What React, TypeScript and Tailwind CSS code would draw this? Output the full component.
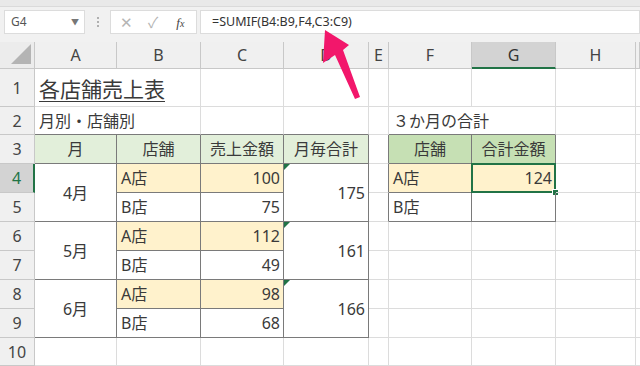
type Edge = 'l' | 'd';

interface Cell {
  t?: string;
  span?: 'r' | 'c';
  r?: Edge;
  b?: Edge;
  bg?: 'g' | 'G' | 'y';
  al?: 'l' | 'c' | 'r';
  tri?: boolean;
  sel?: boolean;
  title?: boolean;
}

const R = { l: 'border-r border-r-[#dcdcdc]', d: 'border-r border-r-[#7a7a7a]' };
const B = { l: 'border-b border-b-[#dcdcdc]', d: 'border-b border-b-[#7a7a7a]' };
const BG = { g: 'bg-[#e2efda]', G: 'bg-[#c6e0b4]', y: 'bg-[#fff2cc]' };
const AL = { l: 'justify-start pl-[4px]', c: 'justify-center', r: 'justify-end pr-[3px]' };

const L: Cell = {};
const dk = (c: Cell = {}): Cell => ({ r: 'd', b: 'd', ...c });

// excel rows 1..10, columns A..I (spans skip covered cells)
const rows: Cell[][] = [
  [{ t: '各店舗売上表', span: 'c', title: true }, L, L, L, L, L, L, L],
  [{ t: '月別・店舗別', span: 'c', b: 'd' }, { b: 'd' }, { b: 'd' }, L, { t: '３か月の合計', span: 'c', b: 'd' }, L, L],
  [
    dk({ t: '月', bg: 'g', al: 'c' }),
    dk({ t: '店舗', bg: 'g', al: 'c' }),
    dk({ t: '売上金額', bg: 'g', al: 'c' }),
    dk({ t: '月毎合計', bg: 'g', al: 'c' }),
    { r: 'd' },
    dk({ t: '店舗', bg: 'G', al: 'c' }),
    dk({ t: '合計金額', bg: 'G', al: 'c' }),
    L,
    L,
  ],
  [
    dk({ t: '4月', span: 'r', al: 'c' }),
    dk({ t: 'A店', bg: 'y' }),
    dk({ t: '100', bg: 'y', al: 'r' }),
    dk({ t: '175', span: 'r', al: 'r', tri: true }),
    { r: 'd' },
    dk({ t: 'A店', bg: 'y' }),
    dk({ t: '124', bg: 'y', al: 'r', sel: true }),
    L,
    L,
  ],
  [dk({ t: 'B店' }), dk({ t: '75', al: 'r' }), { r: 'd' }, dk({ t: 'B店' }), dk(), L, L],
  [
    dk({ t: '5月', span: 'r', al: 'c' }),
    dk({ t: 'A店', bg: 'y' }),
    dk({ t: '112', bg: 'y', al: 'r' }),
    dk({ t: '161', span: 'r', al: 'r', tri: true }),
    L, L, L, L, L,
  ],
  [dk({ t: 'B店' }), dk({ t: '49', al: 'r' }), L, L, L, L, L],
  [
    dk({ t: '6月', span: 'r', al: 'c' }),
    dk({ t: 'A店', bg: 'y' }),
    dk({ t: '98', bg: 'y', al: 'r' }),
    dk({ t: '166', span: 'r', al: 'r', tri: true }),
    L, L, L, L, L,
  ],
  [dk({ t: 'B店' }), dk({ t: '68', al: 'r' }), L, L, L, L, L],
  [L, L, L, L, L, L, L, L, L],
];

const cols = ['A', 'B', 'C', 'D', 'E', 'F', 'G', 'H', ''];

function GridCell({ c }: { c: Cell }) {
  return (
    <div
      className={[
        'relative flex min-w-0 whitespace-nowrap',
        c.title ? 'items-end pb-[6px]' : 'items-center',
        R[c.r ?? 'l'],
        B[c.b ?? 'l'],
        c.bg ? BG[c.bg] : '',
        AL[c.al ?? 'l'],
        c.span === 'r' ? 'row-span-2' : '',
        c.span === 'c' ? 'col-span-2' : '',
      ].join(' ')}
    >
      {c.tri && (
        <div className="absolute left-0 top-0 h-0 w-0 border-r-[6px] border-t-[6px] border-r-transparent border-t-[#217346]" />
      )}
      {c.t && (
        <span
          className={
            c.title
              ? 'text-[21px] leading-none underline decoration-1 underline-offset-[4px]'
              : 'text-[16px] leading-none'
          }
        >
          {c.t}
        </span>
      )}
      {c.sel && (
        <>
          <div className="absolute -left-[1px] -top-[1px] bottom-[-1px] right-[-1px] border-2 border-[#217346]" />
          <div className="absolute -bottom-[4px] -right-[4px] h-[7px] w-[7px] border border-white bg-[#217346]" />
        </>
      )}
    </div>
  );
}

function Toolbar() {
  return (
    <div className="h-[42px] bg-[#f1f1f1]">
      <div className="h-[7px] border-b border-[#dadada] bg-[#e9e9e9]" />
      <div className="flex h-[27px] items-end pl-[4px]">
        <div className="flex h-[24px] w-[81px] items-center justify-between border border-[#dcdcdc] bg-white pl-[6px] pr-[5px] text-[12px] text-[#555]">
          <span>G4</span>
          <span className="text-[8px] text-[#777]">▼</span>
        </div>
        <div className="flex h-[24px] w-[25px] flex-col items-center justify-center gap-[2px]">
          <span className="h-[2px] w-[2px] rounded-full bg-[#9a9a9a]" />
          <span className="h-[2px] w-[2px] rounded-full bg-[#9a9a9a]" />
          <span className="h-[2px] w-[2px] rounded-full bg-[#9a9a9a]" />
        </div>
        <div className="flex h-[24px] w-[87px] items-center border border-[#dcdcdc] bg-white text-[#b5b5b5]">
          <span className="ml-[9px] text-[15px] leading-none">✕</span>
          <span className="ml-[15px] text-[15px] leading-none">✓</span>
          <span className="ml-[18px] font-['Liberation_Serif',serif] text-[13px] italic leading-none text-[#444]">
            f<span className="text-[10px]">x</span>
          </span>
        </div>
        <div className="ml-[3px] flex h-[24px] flex-1 items-center border border-[#dcdcdc] bg-white pl-[11px] text-[12.5px] text-[#333]">
          =SUMIF(B4:B9,F4,C3:C9)
        </div>
      </div>
    </div>
  );
}

export default function App() {
  return (
    <div className="relative h-[366px] w-[640px] overflow-hidden bg-white font-['Noto_Sans','Noto_Sans_CJK_JP',sans-serif] text-[#3a3a3a]">
      <Toolbar />
      <div className="grid grid-cols-[35px_82px_84px_83px_85px_20px_83px_84px_80px_4px] grid-rows-[27px_38px_28px_29px_29px_29px_29px_29px_29px_29px_28px]">
        {/* corner */}
        <div className="relative border-b border-r border-[#c8c8c8] bg-[#ececec]">
          <div className="absolute bottom-[4px] right-[3px] h-0 w-0 border-b-[20px] border-l-[20px] border-b-[#b4b4b4] border-l-transparent" />
        </div>
        {cols.map((c, i) =>
          c === 'G' ? (
            <div
              key={i}
              className="flex items-center justify-center border-b-2 border-r border-b-[#217346] border-r-[#c8c8c8] bg-[#d3d3d3] text-[16px] text-[#333]"
            >
              {c}
            </div>
          ) : (
            <div
              key={i}
              className="flex items-center justify-center border-b border-r border-[#c8c8c8] bg-[#f0f0f0] text-[16px] text-[#444]"
            >
              {c}
            </div>
          )
        )}
        {rows.map((row, ri) => [
          <div
            key={`h${ri}`}
            className={
              ri === 3
                ? 'flex items-center justify-center border-b border-r-2 border-b-[#c8c8c8] border-r-[#217346] bg-[#d3d3d3] text-[16px] text-[#217346]'
                : 'flex items-center justify-center border-b border-r border-[#c8c8c8] bg-[#f0f0f0] text-[16px] text-[#444]'
            }
          >
            {ri + 1}
          </div>,
          ...row.map((c, ci) => <GridCell key={`${ri}-${ci}`} c={c} />),
        ])}
      </div>

      {/* callout arrow */}
      <svg className="pointer-events-none absolute left-0 top-0" width={640} height={366}>
        <polygon points="325,30 349,45 343,50 360,97 355,99 335,55 323,63" fill="#f2176b" />
      </svg>
    </div>
  );
}
